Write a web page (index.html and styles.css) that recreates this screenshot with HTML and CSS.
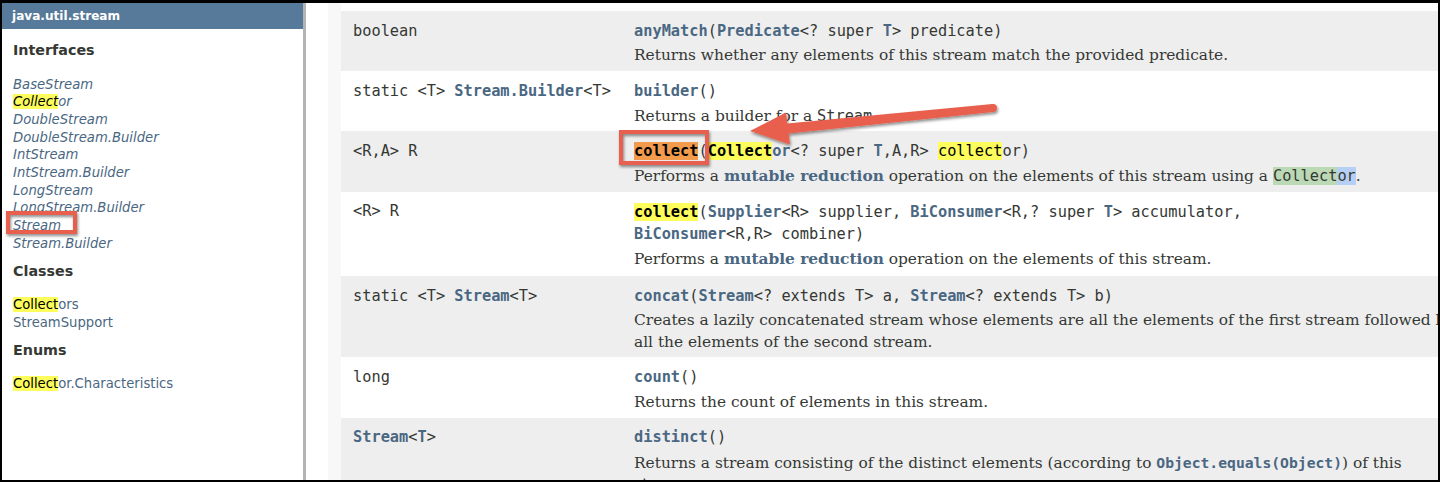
FILE: index.html
```html
<!DOCTYPE html>
<html lang="en">
<head>
<meta charset="utf-8">
<title>Stream (Java SE)</title>
<link rel="stylesheet" href="styles.css">
</head>
<body>
<div class="frame">
  <aside class="sidebar">
    <div class="pkg-bar">java.util.stream</div>
    <nav class="pkg-list">
      <h2>Interfaces</h2>
      <ul class="types types-interfaces">
        <li><a>BaseStream</a></li>
        <li><a><mark>Collect</mark>or</a></li>
        <li><a>DoubleStream</a></li>
        <li><a>DoubleStream.Builder</a></li>
        <li><a>IntStream</a></li>
        <li><a>IntStream.Builder</a></li>
        <li><a>LongStream</a></li>
        <li><a>LongStream.Builder</a></li>
        <li><a>Stream</a></li>
        <li><a>Stream.Builder</a></li>
      </ul>
      <h2>Classes</h2>
      <ul class="types">
        <li><a><mark>Collect</mark>ors</a></li>
        <li><a>StreamSupport</a></li>
      </ul>
      <h2 class="enums">Enums</h2>
      <ul class="types">
        <li><a><mark>Collect</mark>or.Characteristics</a></li>
      </ul>
    </nav>
  </aside>
  <main class="content">
    <div class="summary">
      <table class="member-summary">
        <colgroup><col class="c1"><col class="c2"></colgroup>
        <tr class="alt">
          <td class="col-type"><code>boolean</code></td>
          <td class="col-member">
            <div class="sig"><a class="m">anyMatch</a>(<a class="t">Predicate</a>&lt;? super <a class="t">T</a>&gt; predicate)</div>
            <div class="desc">Returns whether any elements of this stream match the provided predicate.</div>
          </td>
        </tr>
        <tr>
          <td class="col-type"><code>static &lt;T&gt; <a class="t">Stream.Builder</a>&lt;T&gt;</code></td>
          <td class="col-member">
            <div class="sig"><a class="m">builder</a>()</div>
            <div class="desc">Returns a builder for a <code class="plain">Stream</code>.</div>
          </td>
        </tr>
        <tr class="alt">
          <td class="col-type"><code>&lt;R,A&gt; R</code></td>
          <td class="col-member">
            <div class="sig"><a class="m"><mark class="cur">collect</mark></a>(<a class="t"><mark>Collect</mark>or</a>&lt;? super <a class="t">T</a>,A,R&gt; <mark class="plainmark">collect</mark>or)</div>
            <div class="desc">Performs a <a>mutable reduction</a> operation on the elements of this stream using a <code class="plain"><span class="sel-g">Collect</span><span class="sel-b">or</span></code>.</div>
          </td>
        </tr>
        <tr class="tall">
          <td class="col-type"><code>&lt;R&gt; R</code></td>
          <td class="col-member">
            <div class="sig wrapped"><a class="m"><mark>collect</mark></a>(<a class="t">Supplier</a>&lt;R&gt; supplier, <a class="t">BiConsumer</a>&lt;R,? super <a class="t">T</a>&gt; accumulator,<br><a class="t">BiConsumer</a>&lt;R,R&gt; combiner)</div>
            <div class="desc">Performs a <a>mutable reduction</a> operation on the elements of this stream.</div>
          </td>
        </tr>
        <tr class="alt">
          <td class="col-type"><code>static &lt;T&gt; <a class="t">Stream</a>&lt;T&gt;</code></td>
          <td class="col-member">
            <div class="sig"><a class="m">concat</a>(<a class="t">Stream</a>&lt;? extends T&gt; a, <a class="t">Stream</a>&lt;? extends T&gt; b)</div>
            <div class="desc">Creates a lazily concatenated stream whose elements are all the elements of the first stream followed by<br>all the elements of the second stream.</div>
          </td>
        </tr>
        <tr>
          <td class="col-type"><code>long</code></td>
          <td class="col-member">
            <div class="sig"><a class="m">count</a>()</div>
            <div class="desc">Returns the count of elements in this stream.</div>
          </td>
        </tr>
        <tr class="alt">
          <td class="col-type"><code><a class="t">Stream</a>&lt;<a class="t">T</a>&gt;</code></td>
          <td class="col-member">
            <div class="sig"><a class="m">distinct</a>()</div>
            <div class="desc">Returns a stream consisting of the distinct elements (according to <code class="link">Object.equals(Object)</code>) of this<br>stream.</div>
          </td>
        </tr>
      </table>
    </div>
  </main>
</div>
<svg class="annot" width="1440" height="482" viewBox="0 0 1440 482" aria-hidden="true">
  <defs>
    <filter id="sh" x="-20%" y="-60%" width="140%" height="220%">
      <feDropShadow dx="1" dy="2" stdDeviation="1.5" flood-color="#000" flood-opacity="0.45"/>
    </filter>
  </defs>
  <g filter="url(#sh)" fill="none" stroke="#e8604e" stroke-width="4">
    <rect x="8" y="213" width="67" height="19"/>
    <rect x="621" y="132" width="86" height="31"/>
  </g>
  <g filter="url(#sh)" fill="#e8604e">
    <polygon points="750,131 790,144.5 788.6,133.5 993.4,112 992.6,104 787.4,123.5 786,112.5"/>
    <circle cx="993" cy="108" r="4"/>
  </g>
</svg>
</body>
</html>
```

FILE: styles.css
```css
* { box-sizing: border-box; }

html, body {
  margin: 0;
  padding: 0;
  background: #000;
}

body {
  width: 1440px;
  height: 482px;
  overflow: hidden;
  position: relative;
}

.frame {
  display: flex;
  margin: 3px 2px 0 2px;
  height: 477px;
  background: #fff;
  overflow: hidden;
}

/* ---------- sidebar ---------- */
.sidebar {
  width: 304px;
  flex: none;
  border-right: 3px solid #b4b4b4;
  font-family: "DejaVu Sans", sans-serif;
  background: #fff;
}

.pkg-bar {
  height: 26px;
  line-height: 27px;
  padding-left: 10px;
  background: #57799a;
  color: #fff;
  font-weight: bold;
  font-size: 12.1px;
}

.pkg-list {
  padding-left: 11px;
}

.pkg-list h2 {
  margin: 8px 0 15.5px;
  font-size: 14.3px;
  line-height: 20px;
  font-weight: bold;
  color: #353833;
}

.pkg-list h2:first-child {
  margin-top: 11px;
}

.pkg-list h2.enums {
  margin-top: 9px;
  margin-bottom: 14.5px;
}

.types {
  list-style: none;
  margin: 0;
  padding: 0;
}

.types li {
  font-size: 13.2px;
  line-height: 17.7px;
  white-space: nowrap;
}

.types a {
  color: #4a6782;
  text-decoration: none;
}

.types-interfaces a {
  font-style: italic;
}

mark {
  background: #fdfd5c;
  color: #000;
}

/* ---------- content ---------- */
.content {
  flex: 1;
  overflow: hidden;
  padding-left: 22px;
}

.summary {
  height: 100%;
  border-left: 13px solid #f8f8f8;
  padding-top: 8px;
}

.member-summary {
  border-collapse: collapse;
  table-layout: fixed;
  width: 1200px;
  color: #353833;
}

.member-summary col.c1 {
  width: 281px;
}

.member-summary tr.alt {
  background: #eeeeef;
}

.member-summary td {
  vertical-align: top;
  padding: 9.6px 12px 4.6px;
  white-space: nowrap;
  overflow: visible;
}

.member-summary tr.tall td {
  padding-bottom: 5.6px;
}

.col-type code,
.sig {
  font-family: "DejaVu Sans Mono", monospace;
  font-size: 15.3px;
  line-height: 21.5px;
  color: #353833;
}

.sig.wrapped {
  line-height: 22px;
}

.sig a,
.col-type a {
  text-decoration: none;
}

.t,
.m {
  font-weight: bold;
  color: #4a6782;
}

.m mark {
  color: #000;
}

mark.cur {
  background: #f29b4c;
}

mark.plainmark {
  font-weight: normal;
}

.desc {
  margin-top: 3.3px;
  font-family: "DejaVu Serif", serif;
  font-size: 15.4px;
  line-height: 21.2px;
  color: #353833;
}

.tall .desc {
  margin-top: 4px;
}

.desc a {
  font-weight: bold;
  color: #4a6782;
  text-decoration: none;
}

.desc code.plain {
  font-family: "DejaVu Sans Mono", monospace;
  font-size: 15.3px;
  color: #353833;
}

.desc code.link {
  font-family: "DejaVu Sans Mono", monospace;
  font-size: 14.7px;
  font-weight: bold;
  color: #4a6782;
}

.sel-g {
  background: #bcd9b6;
}

.sel-b {
  background: #b5d0f4;
}

/* ---------- annotation overlay ---------- */
.annot {
  position: absolute;
  left: 0;
  top: 0;
  pointer-events: none;
}
```
